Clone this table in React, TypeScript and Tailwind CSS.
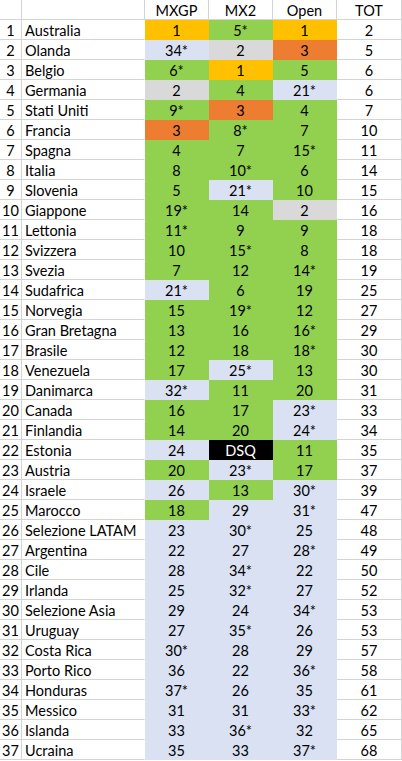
type Fill = "gold" | "green" | "blue" | "gray" | "orange" | "black";

type Row = {
  name: string;
  mxgp: [string, Fill];
  mx2: [string, Fill];
  open: [string, Fill];
  tot: number;
};

const fills: Record<Fill, string> = {
  gold: "bg-[#ffc000] border-transparent",
  green: "bg-[#92d050] border-transparent",
  blue: "bg-[#d9e1f2] border-transparent",
  gray: "bg-[#d9d9d9] border-transparent",
  orange: "bg-[#ed7d31] border-transparent",
  black: "bg-black border-transparent text-white",
};

const rows: Row[] = [
  { name: "Australia", mxgp: ["1", "gold"], mx2: ["5*", "green"], open: ["1", "gold"], tot: 2 },
  { name: "Olanda", mxgp: ["34*", "blue"], mx2: ["2", "gray"], open: ["3", "orange"], tot: 5 },
  { name: "Belgio", mxgp: ["6*", "green"], mx2: ["1", "gold"], open: ["5", "green"], tot: 6 },
  { name: "Germania", mxgp: ["2", "gray"], mx2: ["4", "green"], open: ["21*", "blue"], tot: 6 },
  { name: "Stati Uniti", mxgp: ["9*", "green"], mx2: ["3", "orange"], open: ["4", "green"], tot: 7 },
  { name: "Francia", mxgp: ["3", "orange"], mx2: ["8*", "green"], open: ["7", "green"], tot: 10 },
  { name: "Spagna", mxgp: ["4", "green"], mx2: ["7", "green"], open: ["15*", "green"], tot: 11 },
  { name: "Italia", mxgp: ["8", "green"], mx2: ["10*", "green"], open: ["6", "green"], tot: 14 },
  { name: "Slovenia", mxgp: ["5", "green"], mx2: ["21*", "blue"], open: ["10", "green"], tot: 15 },
  { name: "Giappone", mxgp: ["19*", "green"], mx2: ["14", "green"], open: ["2", "gray"], tot: 16 },
  { name: "Lettonia", mxgp: ["11*", "green"], mx2: ["9", "green"], open: ["9", "green"], tot: 18 },
  { name: "Svizzera", mxgp: ["10", "green"], mx2: ["15*", "green"], open: ["8", "green"], tot: 18 },
  { name: "Svezia", mxgp: ["7", "green"], mx2: ["12", "green"], open: ["14*", "green"], tot: 19 },
  { name: "Sudafrica", mxgp: ["21*", "blue"], mx2: ["6", "green"], open: ["19", "green"], tot: 25 },
  { name: "Norvegia", mxgp: ["15", "green"], mx2: ["19*", "green"], open: ["12", "green"], tot: 27 },
  { name: "Gran Bretagna", mxgp: ["13", "green"], mx2: ["16", "green"], open: ["16*", "green"], tot: 29 },
  { name: "Brasile", mxgp: ["12", "green"], mx2: ["18", "green"], open: ["18*", "green"], tot: 30 },
  { name: "Venezuela", mxgp: ["17", "green"], mx2: ["25*", "blue"], open: ["13", "green"], tot: 30 },
  { name: "Danimarca", mxgp: ["32*", "blue"], mx2: ["11", "green"], open: ["20", "green"], tot: 31 },
  { name: "Canada", mxgp: ["16", "green"], mx2: ["17", "green"], open: ["23*", "blue"], tot: 33 },
  { name: "Finlandia", mxgp: ["14", "green"], mx2: ["20", "green"], open: ["24*", "blue"], tot: 34 },
  { name: "Estonia", mxgp: ["24", "blue"], mx2: ["DSQ", "black"], open: ["11", "green"], tot: 35 },
  { name: "Austria", mxgp: ["20", "green"], mx2: ["23*", "blue"], open: ["17", "green"], tot: 37 },
  { name: "Israele", mxgp: ["26", "blue"], mx2: ["13", "green"], open: ["30*", "blue"], tot: 39 },
  { name: "Marocco", mxgp: ["18", "green"], mx2: ["29", "blue"], open: ["31*", "blue"], tot: 47 },
  { name: "Selezione LATAM", mxgp: ["23", "blue"], mx2: ["30*", "blue"], open: ["25", "blue"], tot: 48 },
  { name: "Argentina", mxgp: ["22", "blue"], mx2: ["27", "blue"], open: ["28*", "blue"], tot: 49 },
  { name: "Cile", mxgp: ["28", "blue"], mx2: ["34*", "blue"], open: ["22", "blue"], tot: 50 },
  { name: "Irlanda", mxgp: ["25", "blue"], mx2: ["32*", "blue"], open: ["27", "blue"], tot: 52 },
  { name: "Selezione Asia", mxgp: ["29", "blue"], mx2: ["24", "blue"], open: ["34*", "blue"], tot: 53 },
  { name: "Uruguay", mxgp: ["27", "blue"], mx2: ["35*", "blue"], open: ["26", "blue"], tot: 53 },
  { name: "Costa Rica", mxgp: ["30*", "blue"], mx2: ["28", "blue"], open: ["29", "blue"], tot: 57 },
  { name: "Porto Rico", mxgp: ["36", "blue"], mx2: ["22", "blue"], open: ["36*", "blue"], tot: 58 },
  { name: "Honduras", mxgp: ["37*", "blue"], mx2: ["26", "blue"], open: ["35", "blue"], tot: 61 },
  { name: "Messico", mxgp: ["31", "blue"], mx2: ["31", "blue"], open: ["33*", "blue"], tot: 62 },
  { name: "Islanda", mxgp: ["33", "blue"], mx2: ["36*", "blue"], open: ["32", "blue"], tot: 65 },
  { name: "Ucraina", mxgp: ["35", "blue"], mx2: ["33", "blue"], open: ["37*", "blue"], tot: 68 },
];

const cell = "h-[20px] border-r border-b leading-[20px] pt-px whitespace-nowrap overflow-hidden";
const white = "border-[#d4d4d4]";

function Score({ v }: { v: [string, Fill] }) {
  return <div className={`${cell} ${fills[v[1]]} text-center`}>{v[0]}</div>;
}

export default function App() {
  return (
    <div
      className="w-[402px] h-[761px] bg-white text-black text-[14.5px] overflow-hidden"
      style={{ fontFamily: 'Lato, "Liberation Sans", sans-serif' }}
    >
      <div className="grid grid-cols-[22px_123px_64px_64px_64px_65px]">
        <div className={`${cell} ${white}`} />
        <div className={`${cell} ${white}`} />
        <div className={`${cell} ${white} text-center`}>MXGP</div>
        <div className={`${cell} ${white} text-center`}>MX2</div>
        <div className={`${cell} ${white} text-center`}>Open</div>
        <div className={`${cell} ${white} text-center`}>TOT</div>

        {rows.map((r, i) => (
          <div key={r.name} className="contents">
            <div className={`${cell} ${white} text-center`}>{i + 1}</div>
            <div className={`${cell} border-b-[#d4d4d4] border-r-transparent pl-[3px]`}>{r.name}</div>
            <Score v={r.mxgp} />
            <Score v={r.mx2} />
            <Score v={r.open} />
            <div className={`${cell} ${white} text-center`}>{r.tot}</div>
          </div>
        ))}
      </div>
    </div>
  );
}
